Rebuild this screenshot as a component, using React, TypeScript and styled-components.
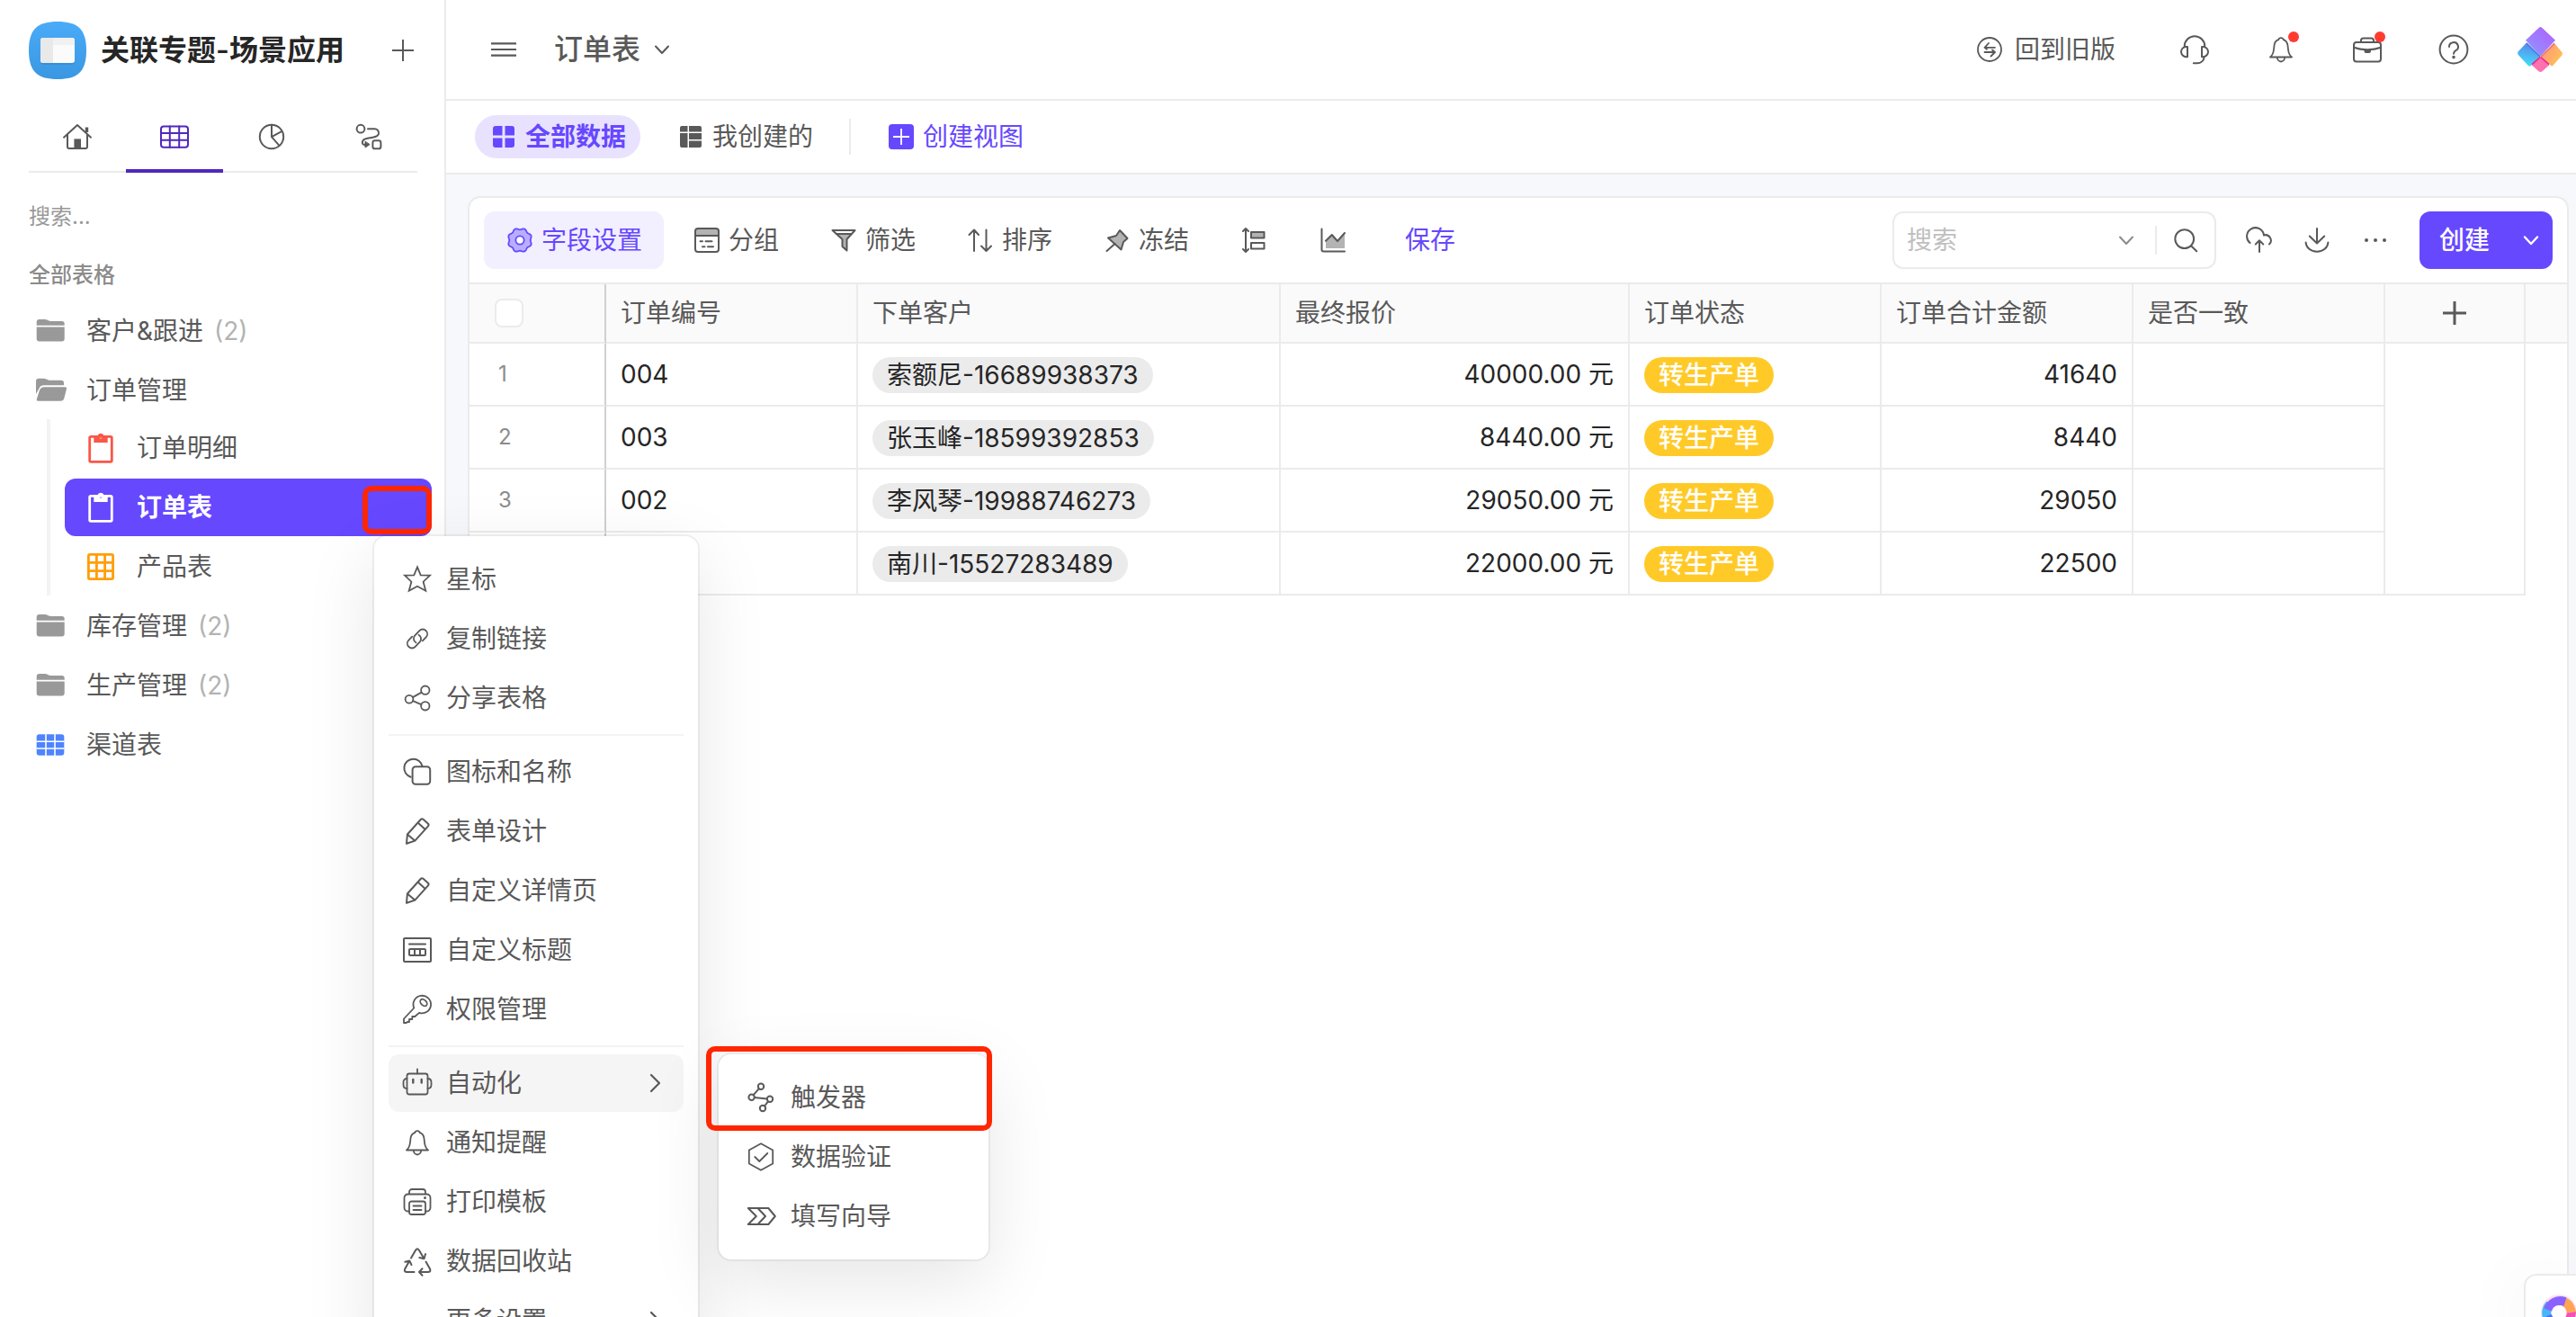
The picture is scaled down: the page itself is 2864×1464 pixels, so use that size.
import React from "react";
import styled, { createGlobalStyle, css } from "styled-components";

const color = {
  text: "#262626",
  sub: "#595959",
  muted: "#8c8c8c",
  faint: "#b3b3b3",
  line: "#ebebeb",
  primary: "#6648ff",
  canvas: "#f7f8fb",
  annotation: "#ff2600",
};

const GlobalStyle = createGlobalStyle`
  *, *::before, *::after { box-sizing: border-box; }
  body {
    margin: 0;
    background: #fff;
    color: ${color.sub};
    font-family: Inter, "Noto Sans CJK SC", sans-serif;
    font-size: 28px;
    line-height: 40px;
  }
  button, input { font: inherit; color: inherit; }
  button { border: 0; background: none; padding: 0; cursor: pointer; white-space: nowrap; }
  ul { list-style: none; margin: 0; padding: 0; }
  h1, h2 { margin: 0; font-size: inherit; font-weight: inherit; }
`;

/* ---------- icons ---------- */

const Svg = styled.svg.attrs({ fill: "none", stroke: "currentColor", "aria-hidden": true })`
  display: block;
  flex: none;
  overflow: visible;
`;

type IconProps = { size?: number; w?: number; children: React.ReactNode };
const Icon = ({ size = 32, w = 2, children }: IconProps) => (
  <Svg width={size} height={size} viewBox={`0 0 ${size} ${size}`} strokeWidth={w} strokeLinecap="round" strokeLinejoin="round">
    {children}
  </Svg>
);

const gearPath =
  Array.from({ length: 96 }, (_, i) => {
    const a = (i / 96) * Math.PI * 2;
    const r = 12.6 - 0.9 * Math.cos(8 * a);
    return `${i ? "L" : "M"}${(14 + r * Math.cos(a)).toFixed(2)} ${(14 + r * Math.sin(a)).toFixed(2)}`;
  }).join("") + "Z";

const AppLogo = () => (
  <Svg width="64" height="64" viewBox="0 0 64 64" strokeWidth="0">
    <defs>
      <linearGradient id="appBg" x1="0" y1="0" x2="0" y2="1">
        <stop offset="0" stopColor="#4aabf8" />
        <stop offset="1" stopColor="#3a97e2" />
      </linearGradient>
    </defs>
    <path fill="url(#appBg)" d="M32 0C54 0 64 8 64 32S54 64 32 64 0 56 0 32 10 0 32 0Z" />
    <rect x="13" y="20" width="38" height="28" rx="4" fill="#2c7fc4" opacity=".45" />
    <rect x="13" y="18" width="38" height="28" rx="3" fill="#fbfbfb" />
    <path fill="#f1f1f1" d="M27 18h21a3 3 0 0 1 3 3v5H27z" />
    <path fill="#e9e9e9" d="M16 18h11v28H16a3 3 0 0 1-3-3V21a3 3 0 0 1 3-3z" />
  </Svg>
);

const HomeIcon = () => (
  <Icon>
    <path d="M1 16.700 16 3l15 13.700M5 13.500V27a2 2 0 0 0 2 2h18a2 2 0 0 0 2-2V13.500" />
    <path d="M26.500 11V5.500" strokeWidth="3.400" strokeLinecap="butt" />
    <path d="M12.400 29V18.400h7.600V29z" fill="currentColor" stroke="none" />
  </Icon>
);
const GridIcon = () => (
  <Icon>
    <rect x="1" y="4.400" width="30" height="23.400" rx="3" />
    <path d="M10.800 4.400v23.400M21.200 4.400v23.400M1 12h30M1 19.800h30" />
  </Icon>
);
const PieIcon = () => (
  <Icon>
    <circle cx="16" cy="16" r="13.200" />
    <path d="M16 2.800v13.400l11-6M16 16.200l8.500 9.600" />
  </Icon>
);
const FlowIcon = () => (
  <Icon>
    <circle cx="7" cy="7.200" r="4.400" />
    <path d="M15 7.300h7.500a4.600 4.600 0 0 1 4.500 5.500c-.6 2.600-3 3.300-6.500 3.900l-6 1.100c-3.500.6-5 1.600-5.600 3.900-.4 1.900.9 3.300 3.100 3.300h1" />
    <path d="M12 21.600v6.400l4.800-3.200z" fill="currentColor" strokeWidth="1" />
    <rect x="20.400" y="20.300" width="9" height="9" rx="2.400" />
  </Icon>
);
const FolderIcon = () => (
  <Icon w={0}>
    <path fill="#999" d="M.7 9.800V6a3 3 0 0 1 3-3h6.500c1.500 0 2.600 1 4 1.600.8.300 1.200.4 2 .4h12.500a3 3 0 0 1 3 3v1.800zM.7 11.400h31v13a3 3 0 0 1-3 3h-25a3 3 0 0 1-3-3z" />
  </Icon>
);
const FolderOpenIcon = () => (
  <Icon w={0}>
    <path fill="#999" d="M0 20V5.700a3 3 0 0 1 3-3h6c1.500 0 2.500.8 3.800 1.400.7.4 1.300.6 2 .6H28a3 3 0 0 1 3 3v2.600H9c-2.600 0-4.500 1-5.300 3.300z" />
    <path fill="#999" d="M9.500 12.200h23a1.600 1.600 0 0 1 1.500 2l-2.700 10.600a4 4 0 0 1-3.900 3h-25a1.600 1.600 0 0 1-1.600-2L3.900 16a5.600 5.600 0 0 1 5.600-3.800z" />
  </Icon>
);
const ClipboardIcon = () => (
  <Icon w={2.8}>
    <rect x="3.700" y="3.400" width="24.600" height="28" rx="1.400" />
    <path
      fill="currentColor"
      stroke="none"
      fillRule="evenodd"
      d="M8.300 2.400h4A3.900 3.900 0 0 1 19.700 2.400h4V10H8.300ZM17.500 4a1.500 1.500 0 1 0-3 0 1.500 1.500 0 0 0 3 0Z"
    />
  </Icon>
);
const OrangeGridIcon = () => (
  <Icon w={2.8}>
    <rect x="2.400" y="2.400" width="27.200" height="27.200" rx="1.500" />
    <path d="M11.400 2.400v27.200M20.600 2.400v27.200M2.400 11.400h27.200M2.400 20.600h27.200" />
  </Icon>
);
const BlueGridIcon = () => (
  <Icon>
    <rect x=".7" y="4.200" width="30.600" height="23.600" rx="3" fill="currentColor" stroke="none" />
    <path d="M11 4v24M21 4v24M.5 12.200h31M.5 20h31" stroke="#fff" strokeWidth="1.600" strokeLinecap="butt" />
  </Icon>
);
const PlusIcon = ({ size = 24, w = 2 }: { size?: number; w?: number }) => (
  <Icon size={size} w={w}>
    <path strokeLinecap="butt" d={`M${size / 2} 0V${size}M0 ${size / 2}H${size}`} />
  </Icon>
);
const HamburgerIcon = () => (
  <Icon size={28} w={2.2}>
    <path strokeLinecap="butt" d="M0 7.400h28M0 14h28M0 20.600h28" />
  </Icon>
);
const ChevronDown = ({ w = 2 }: { w?: number }) => (
  <Icon size={16} w={w}>
    <path d="M1 4.500 8 12l7-7.500" />
  </Icon>
);
const ChevronRight = () => (
  <Icon size={20} w={2.2}>
    <path d="m6 1 9 9-9 9" />
  </Icon>
);
const BoardIcon = () => (
  <Icon size={24} w={0}>
    <path fill="currentColor" d="M3 0h7.500v10.500H0V3a3 3 0 0 1 3-3zM13.500 0H21a3 3 0 0 1 3 3v7.500H13.500zM0 13.500h10.500V24H3a3 3 0 0 1-3-3zM13.500 13.500H24V21a3 3 0 0 1-3 3h-7.500z" />
  </Icon>
);
const SheetIcon = () => (
  <Icon size={24} w={0}>
    <path fill="currentColor" d="M2 0h6.500v6.500H0V2a2 2 0 0 1 2-2zM10 0h12a2 2 0 0 1 2 2v4.500H10zM0 8h8.500v16H2a2 2 0 0 1-2-2zM10 8h14v7H10zM10 16.600h14V22a2 2 0 0 1-2 2H10z" />
  </Icon>
);
const AddViewIcon = () => (
  <Icon size={28} w={1.8}>
    <rect width="28" height="28" rx="4" fill="currentColor" stroke="none" />
    <path stroke="#fff" strokeLinecap="butt" d="M14 5v18M5 14h18" />
  </Icon>
);
const GearIcon = () => (
  <Icon size={28} w={1.8}>
    <path d={gearPath} fill="#b9adff" />
    <circle cx="14" cy="14" r="4.600" fill="#fff" />
  </Icon>
);
const GroupIcon = () => (
  <Icon size={28}>
    <path d="M1 9V4a3 3 0 0 1 3-3h20a3 3 0 0 1 3 3v5z" fill="#b3b3b3" />
    <path d="M1 9v15a3 3 0 0 0 3 3h20a3 3 0 0 0 3-3V9M6.500 15.300h2.500M12.500 15.300h7M9 21.300h2.500M15 21.300h6" />
  </Icon>
);
const FunnelIcon = () => (
  <Icon size={28}>
    <path d="M5.500 7h17L17.500 13v12.500L12.500 21v-8z" fill="#b3b3b3" stroke="none" />
    <path d="M1.500 3h25l-9 10v12.500l-5-4.500v-8zM5.500 7h17" />
  </Icon>
);
const SortIcon = () => (
  <Icon size={28}>
    <path d="M7 26V2.500M1.500 8 7 2.500 12 8M20.500 2.500V26M15 20.500l5.500 5.500 5.500-5.500" />
  </Icon>
);
const PinIcon = () => (
  <Icon size={28}>
    <path d="m17 3 8.500 9-4.500 4-2.500 8.500L4 11.500 13 9z" fill="#b3b3b3" />
    <path d="M11.500 18 2.500 26" />
  </Icon>
);
const RowHeightIcon = () => (
  <Icon size={28}>
    <path d="M5 1.500v25M2 4l3-3 3 3M2 24l3 3 3-3" />
    <rect x="11" y="5" width="14.500" height="6.500" fill="#b3b3b3" />
    <rect x="11" y="17" width="14.500" height="6.500" />
  </Icon>
);
const ChartIcon = () => (
  <Icon size={28}>
    <path d="M6 15.500 12.800 8l6.200 7L27 6.500V23H6z" fill="#b3b3b3" stroke="none" />
    <path d="M1.500 1.500v23a2 2 0 0 0 2 2H27M6 14.700 12.800 8l6.200 7 8-9" />
  </Icon>
);
const SwapIcon = () => (
  <Icon size={28} w={1.8}>
    <circle cx="14" cy="14" r="13" />
    <path d="M20 11.800H8.500L13 7M8.500 11.800l2.500 2M8.500 17h11.500l-4.500 4.500M20 17l-3-2.500" />
  </Icon>
);
const HeadsetIcon = () => (
  <Icon>
    <path d="M4.700 13.500v-1a11.300 11.300 0 0 1 22.600 0v1M8 13v11.200H6.600a5.600 5.600 0 0 1 0-11.200zM24 13v11.200h1.400a5.600 5.600 0 0 0 0-11.200zM26.700 24.300c-.5 4-3.500 7-8 7h-3.900" />
  </Icon>
);
const BellIcon = () => (
  <Icon w={1.8}>
    <path d="M4 24.500c2.500-2 3.500-4 4-8.500l.5-4.500c.4-3.500 2-5.400 4.700-6.300a2.900 2.900 0 0 1 5.600 0c2.700.9 4.300 2.800 4.700 6.300l.5 4.500c.5 4.500 1.500 6.500 4 8.500zM11.800 24.500a4.200 5 0 0 0 8.400 0" />
  </Icon>
);
const BriefcaseIcon = () => (
  <Icon>
    <rect x="1" y="8" width="30" height="21.400" rx="3" />
    <path d="M9 8V6a2.600 2.600 0 0 1 2.600-2.600h8.800A2.600 2.600 0 0 1 23 6v2M1 13.800c9 3.400 21 3.400 30 0" />
    <path d="M12.500 16.300h7.500v1.700a2 2 0 0 1-2 2h-3.500a2 2 0 0 1-2-2z" fill="currentColor" stroke="none" />
  </Icon>
);
const HelpIcon = () => (
  <Icon>
    <circle cx="16" cy="16" r="15.400" />
    <path d="M11 13a5 4.800 0 1 1 7.300 4.200c-1.500.9-2.300 1.800-2.300 3.600" />
    <circle cx="16" cy="24.600" r=".8" fill="currentColor" />
  </Icon>
);
const BrandIcon = () => (
  <Svg width="50" height="50" viewBox="0 0 50 50" strokeWidth="0">
    <defs>
      <linearGradient id="brandA" x1="1" y1="0" x2="0" y2="1">
        <stop offset="0" stopColor="#b35cff" />
        <stop offset="1" stopColor="#8b9bff" />
      </linearGradient>
      <linearGradient id="brandB" x1=".6" y1="0" x2=".4" y2="1">
        <stop offset="0" stopColor="#5c82ea" />
        <stop offset="1" stopColor="#41e0fb" />
      </linearGradient>
      <linearGradient id="brandC" x1="0" y1="0" x2="1" y2=".6">
        <stop offset="0" stopColor="#ff8f86" />
        <stop offset="1" stopColor="#ffc156" />
      </linearGradient>
    </defs>
    <path fill="url(#brandB)" d="M10 17.500 25.500 33 14.500 43.200q-1.300 1-2.600-.2L.8 31q-1.500-2 0-3.800z" />
    <path fill="url(#brandC)" d="M41 18 49.400 28q1.300 1.800 0 3.600L39.500 42.800q-1.200 1.200-2.500 0L25.500 33z" />
    <path fill="url(#brandA)" d="M23.600 1q1.900-1.800 3.800 0L42 14.700 25.500 32.500 9 14.700z" />
    <path fill="#ff70ae" d="M25.500 33.500 35.500 42l-8 7.200q-2 1.500-4 0l-8-7.200z" />
    <path stroke="#e6288b" strokeWidth="1.600" d="M25.800 33.500 35 41.600M25.200 33.500 16 41.600" />
    <path stroke="#4c74e0" strokeWidth="1.600" d="M10 18 25 33" />
    <path stroke="#ef7068" strokeWidth="1.600" d="M41 18.400 26 33" />
  </Svg>
);
const SearchIcon = () => (
  <Icon size={28}>
    <circle cx="12.700" cy="12.600" r="10.400" />
    <path d="m20.300 20.500 5.900 5.700" />
  </Icon>
);
const UploadIcon = () => (
  <Icon size={28}>
    <path d="M3.500 17A9.500 9.500 0 1 1 19 8.500a6 6 0 0 1 6 10M14 27V14.500M9.800 18.500l4.200-4.200 4.200 4.200" />
  </Icon>
);
const DownloadIcon = () => (
  <Icon size={28}>
    <path d="M14 1v16.500M5.800 9.500l8.200 8 8.200-8M1.600 16.500c.5 6 5.400 10.200 12.400 10.200s11.900-4.200 12.400-10.200" />
  </Icon>
);
const DotsIcon = () => (
  <Icon size={28} w={0}>
    <g fill="currentColor">
      <circle cx="4" cy="14" r="2" />
      <circle cx="14" cy="14" r="2" />
      <circle cx="24" cy="14" r="2" />
    </g>
  </Icon>
);

const StarIcon = () => (
  <Icon w={1.8}>
    <path strokeLinejoin="miter" d="m16 2.300 3.700 9.100 10.300.3-7.400 7 2.700 10-9.300-5-9.300 5 2.700-10-7.400-7 10.300-.3z" />
  </Icon>
);
const LinkIcon = () => (
  <Icon w={1.8}>
    <path d="M14.500 20.300a5 5 0 0 1-1.400-7.600l5.200-5.600a5 5 0 0 1 7.300 0 5.200 5.200 0 0 1 0 7.300l-3.800 4" />
    <path d="M17.500 11.700a5 5 0 0 1 1.400 7.600l-5.200 5.600a5 5 0 0 1-7.300 0 5.200 5.200 0 0 1 0-7.300l3.800-4" />
  </Icon>
);
const ShareIcon = () => (
  <Icon w={1.8}>
    <circle cx="7" cy="17.300" r="4.400" />
    <circle cx="24.800" cy="7.200" r="4.700" />
    <circle cx="24.800" cy="24.800" r="4.700" />
    <path d="m10.900 15.100 9.800-5.500M11 19.200l9.400 3.900" />
  </Icon>
);
const ShapesIcon = () => (
  <Icon>
    <rect x="10.600" y="10.300" width="19.600" height="19.400" rx="3.500" />
    <path d="M8.700 21.700A10.200 10.200 0 1 1 21.600 10" />
  </Icon>
);
const PencilIcon = () => (
  <Icon>
    <path d="m4 29.800.9-10.300L19.700 3a2 2 0 0 1 2.800-.2l5.300 4.800a2 2 0 0 1 .2 2.800L13.300 26.600zM4.900 19.500l8.400 7.100M16.600 6.500l7.600 6.900" />
  </Icon>
);
const TitleIcon = () => (
  <Icon>
    <rect x="1" y="3" width="30" height="26" rx="1" />
    <path d="M7 9.500h18" />
    <rect x="7" y="15" width="18" height="7" rx="1" />
    <path d="M13 15v7M19 15v7" />
  </Icon>
);
const KeyIcon = () => (
  <Icon w={1.8}>
    <path d="M12.300 14.500A9.800 9.800 0 1 1 18 19.800L13.300 24h-3v3H7v3H5l-1.300 1H1v-4.500z" />
    <ellipse cx="23" cy="8.500" rx="3" ry="4.400" transform="rotate(-45 23 8.500)" />
  </Icon>
);
const RobotIcon = () => (
  <Icon w={1.8}>
    <rect x="4.500" y="5.500" width="23" height="23" rx="2.500" />
    <path d="M16 .5v5M4.500 11C2 11 .5 12.500.5 15v3c0 2.500 1.500 4 4 4M27.500 11c2.500 0 4 1.500 4 4v3c0 2.500-1.500 4-4 4" />
    <path d="M11.300 12v3.500M20.700 12v3.500" strokeWidth="2.400" />
  </Icon>
);
const PrinterIcon = () => (
  <Icon w={1.8}>
    <path d="M7 7.500V5a3 3 0 0 1 3-3h12a3 3 0 0 1 3 3v2.500M7 26.500H5.500a4 4 0 0 1-4-4v-11a4 4 0 0 1 4-4h21a4 4 0 0 1 4 4v11a4 4 0 0 1-4 4H25" />
    <path d="M7 18a2.500 2.500 0 0 1 2.500-2.500h13A2.500 2.500 0 0 1 25 18v9.500a2.500 2.500 0 0 1-2.500 2.500h-13A2.500 2.500 0 0 1 7 27.500zM11.500 20.500h9M11.500 25h9" />
    <circle cx="24.500" cy="11.500" r=".6" fill="currentColor" />
  </Icon>
);
const RecycleIcon = () => (
  <Icon>
    <path d="M9 12.500 14.200 3.600q1.800-2.600 3.600 0L23.500 13.300M25 8l-1.500 5.300L18.300 12" />
    <path d="M25.500 16.500 30 24.500q1.500 3.500-2.300 3.500H18M21.500 24.300 18 28l3.500 3.700" />
    <path d="M12.500 28H4.500q-3.700 0-2.300-3.500L7.300 15.500M2.300 16.800l5-1.300 2.200 4.500" />
  </Icon>
);
const TriggerIcon = () => (
  <Icon>
    <circle cx="15" cy="3.700" r="3.200" />
    <circle cx="4.600" cy="15.700" r="3.200" />
    <circle cx="25" cy="17.800" r="3.200" />
    <circle cx="17" cy="28" r="3.200" />
    <path d="m12.900 6.200-6.200 7M7.800 16l14 1.500M23 20.300l-4 5.200" />
  </Icon>
);
const ValidateIcon = () => (
  <Icon w={1.8}>
    <path d="m15 1.200 13.200 7.300v15L15 30.800 1.800 23.500v-15z" />
    <path d="m8.300 16 5 5 9-9" />
  </Icon>
);
const GuideIcon = () => (
  <Icon>
    <path d="M.8 7h22.500l7.500 9-7.500 9H.8l9-9zM11.500 7l8.500 9-8.500 9" />
  </Icon>
);

/* ---------- shell ---------- */

const Page = styled.div`
  position: relative;
  display: flex;
  height: 100vh;
  overflow: hidden;
  background: #fff;
`;

const Sidebar = styled.aside`
  position: relative;
  z-index: 2;
  display: flex;
  flex-direction: column;
  flex: none;
  width: 496px;
  border-right: 2px solid ${color.line};
  padding: 0 14px 0 24px;
`;

const AppHeader = styled.header`
  display: flex;
  align-items: center;
  gap: 16px;
  height: 112px;
  padding: 0 16px 0 8px;
`;

const AppName = styled.h1`
  flex: 1;
  font-size: 32px;
  font-weight: 600;
  color: ${color.text};
  white-space: nowrap;
`;

const IconButton = styled.button<{ $size?: number }>`
  position: relative;
  display: flex;
  align-items: center;
  justify-content: center;
  width: ${(p) => p.$size ?? 32}px;
  height: ${(p) => p.$size ?? 32}px;
`;

const TabBar = styled.nav`
  display: grid;
  grid-template-columns: repeat(4, 1fr);
  flex: none;
  height: 80px;
  margin: 0 16px 0 8px;
  box-shadow: inset 0 -2px ${color.line};
`;

const Tab = styled.button<{ $active?: boolean }>`
  display: flex;
  align-items: center;
  justify-content: center;
  border: solid transparent;
  border-width: 4px 0;
  ${(p) => p.$active && css`
    color: #5127bd;
    border-bottom-color: #5127bd;
  `}
`;

const TreeSearch = styled.input`
  height: 48px;
  margin: 24px 8px 0;
  padding: 0;
  border: 0;
  outline: 0;
  font-size: 24px;
  &::placeholder { color: #999; opacity: 1; }
`;

const TreeHeading = styled.h2`
  margin: 26px 8px 14px;
  font-size: 24px;
  line-height: 32px;
  font-weight: 500;
  color: ${color.muted};
`;

const Tree = styled.ul`
  display: flex;
  flex-direction: column;
  gap: 2px;
`;

const Branch = styled(Tree)`
  margin-left: 28px;
  border-left: 4px solid #f3f3f3;
  padding-left: 16px;
`;

const TreeItem = styled.li`
  position: relative;
`;

const TreeRow = styled.button<{ $indent: number; $active?: boolean }>`
  display: flex;
  align-items: center;
  gap: 24px;
  width: 100%;
  height: 64px;
  padding-left: ${(p) => p.$indent}px;
  border-radius: 12px;
  ${(p) => p.$active && css`
    background: ${color.primary};
    color: #fff;
    font-weight: 600;
  `}
`;

const Tint = styled.span<{ $c: string }>`
  color: ${(p) => p.$c};
`;

const Count = styled.span`
  margin-left: 12px;
  color: ${color.faint};
`;

/* ---------- popup menus ---------- */

const Menu = styled.div`
  position: absolute;
  z-index: 5;
  padding: 16px;
  border-radius: 14px;
  background: #fff;
  box-shadow: 0 0 0 2px rgba(0, 0, 0, 0.05), 0 24px 80px rgba(0, 0, 0, 0.1);
`;

const ContextMenu = styled(Menu)`
  top: 100%;
  left: 344px;
  width: 360px;
`;

const SubMenu = styled(Menu)`
  top: 0;
  left: 367px;
  width: 300px;
`;

const MenuGroup = styled.ul`
  display: flex;
  flex-direction: column;
  gap: 2px;
  & + & {
    margin-top: 8px;
    border-top: 2px solid #f3f3f3;
    padding-top: 8px;
  }
`;

const MenuItem = styled.li`
  position: relative;
`;

const MenuButton = styled.button<{ $open?: boolean }>`
  display: flex;
  align-items: center;
  gap: 16px;
  width: 100%;
  height: 64px;
  padding: 0 22px 0 16px;
  border-radius: 12px;
  background: ${(p) => (p.$open ? "#f5f5f5" : "none")};
`;

const MenuLabel = styled.span`
  flex: 1;
  text-align: left;
`;

const Callout = styled.div<{ $x: number; $y: number; $w: number; $h: number }>`
  position: absolute;
  left: ${(p) => p.$x}px;
  top: ${(p) => p.$y}px;
  width: ${(p) => p.$w}px;
  height: ${(p) => p.$h}px;
  border: 6px solid ${color.annotation};
  border-radius: 10px;
  pointer-events: none;
`;

/* ---------- main column ---------- */

const Main = styled.main`
  display: flex;
  flex-direction: column;
  flex: 1;
  min-width: 0;
  background: ${color.canvas};
`;

const TopBar = styled.header`
  display: flex;
  align-items: center;
  flex: none;
  height: 112px;
  padding: 0 15px 0 48px;
  border-bottom: 2px solid ${color.line};
  background: #fff;
`;

const PageTitle = styled.button`
  display: flex;
  align-items: center;
  gap: 16px;
  margin-left: 40px;
  font-size: 32px;
  font-weight: 500;
`;

const TopActions = styled.div`
  display: flex;
  align-items: center;
  gap: 64px;
  margin-left: auto;
`;

const LabelButton = styled.button`
  display: flex;
  align-items: center;
  gap: 14px;
`;

const LegacyButton = styled(LabelButton)`
  margin-right: 8px;
`;

const RedDot = styled.span`
  position: absolute;
  top: -4px;
  right: -4px;
  width: 12px;
  height: 12px;
  border-radius: 50%;
  background: #ff3b30;
`;

const BrandLink = styled.a`
  margin-left: -9px;
`;

const ViewBar = styled.nav`
  display: flex;
  align-items: center;
  flex: none;
  height: 82px;
  padding: 0 32px;
  border-bottom: 2px solid ${color.line};
  background: #fff;
`;

const ViewTab = styled.button<{ $active?: boolean }>`
  display: flex;
  align-items: center;
  gap: 12px;
  height: 48px;
  margin-right: 24px;
  padding: 0 16px 0 20px;
  border-radius: 24px;
  ${(p) => p.$active && css`
    background: #e8e2ff;
    color: ${color.primary};
    font-weight: 600;
  `}
`;

const ViewDivider = styled.span`
  width: 2px;
  height: 40px;
  margin-right: 42px;
  background: ${color.line};
`;

const AddView = styled(LabelButton)`
  gap: 10px;
  color: ${color.primary};
`;

const Card = styled.section`
  flex: 1;
  min-height: 0;
  margin: 24px 8px 0 24px;
  border: 2px solid ${color.line};
  border-bottom: 0;
  border-radius: 14px 14px 0 0;
  background: #fff;
  overflow: hidden;
`;

const Toolbar = styled.div`
  display: flex;
  align-items: center;
  gap: 8px;
  height: 96px;
  padding: 0 16px;
  border-bottom: 2px solid ${color.line};
`;

const Tool = styled.button<{ $active?: boolean }>`
  display: flex;
  align-items: center;
  gap: 10px;
  height: 64px;
  padding: 0 24px 0 26px;
  border-radius: 12px;
  ${(p) => p.$active && css`
    background: #f2efff;
    color: ${color.primary};
  `}
`;

const IconTool = styled(Tool)`
  padding: 0 26px;
`;

const SaveButton = styled(Tool)`
  padding: 0 32px;
  color: ${color.primary};
`;

const SearchBox = styled.div`
  display: flex;
  align-items: center;
  width: 360px;
  height: 64px;
  margin-left: auto;
  margin-right: 8px;
  border: 2px solid ${color.line};
  border-radius: 12px;
`;

const SearchInput = styled.input`
  flex: 1;
  min-width: 0;
  height: 60px;
  padding: 0 0 0 14px;
  border: 0;
  outline: 0;
  background: none;
  &::placeholder { color: #bfbfbf; opacity: 1; }
`;

const SearchScope = styled(IconButton)`
  width: 64px;
  color: ${color.muted};
`;

const SearchDivider = styled.span`
  width: 2px;
  height: 32px;
  background: ${color.line};
`;

const SearchGo = styled(IconButton)`
  width: 64px;
`;

const CreateButton = styled.button`
  display: flex;
  align-items: center;
  justify-content: space-between;
  width: 148px;
  height: 64px;
  margin-left: 8px;
  padding: 0 16px 0 22px;
  border-radius: 12px;
  background: ${color.primary};
  color: #fff;
  font-weight: 500;
`;

/* ---------- table ---------- */

const Table = styled.table`
  width: 100%;
  table-layout: fixed;
  border-collapse: separate;
  border-spacing: 0;
  color: ${color.text};
`;

const Col = styled.col<{ $w?: number }>`
  width: ${(p) => (p.$w ? `${p.$w}px` : "auto")};
`;

const cell = css`
  padding: 0 16px;
  border: solid ${color.line};
  border-width: 0 2px 2px 0;
  white-space: nowrap;
`;

const Th = styled.th<{ $first?: boolean; $last?: boolean }>`
  ${cell}
  height: 66px;
  background: #fafafa;
  color: ${color.sub};
  font-weight: 400;
  text-align: left;
  ${(p) => p.$first && css`
    padding-left: 28px;
    border-right-color: #d0d0d0;
  `}
  ${(p) => p.$last && css`border-right-width: 0;`}
`;

const Td = styled.td<{ $num?: boolean }>`
  ${cell}
  height: 70px;
  text-align: ${(p) => (p.$num ? "right" : "left")};
`;

const IndexTd = styled(Td)`
  padding-left: 32px;
  border-right-color: #d0d0d0;
  font-size: 24px;
  color: ${color.muted};
`;

const EmptyTd = styled.td`
  padding: 0;
`;

const CheckBox = styled.input`
  appearance: none;
  display: block;
  width: 32px;
  height: 32px;
  margin: 0;
  border: 2px solid ${color.line};
  border-radius: 8px;
  background: #fff;
`;

const AddColumn = styled(IconButton)`
  margin: 0 auto;
`;

const Tag = styled.span<{ $solid?: boolean }>`
  display: inline-block;
  height: 40px;
  padding: 0 16px;
  border-radius: 20px;
  vertical-align: middle;
  background: ${(p) => (p.$solid ? "#ffca28" : "#ebebeb")};
  color: ${(p) => (p.$solid ? "#fff" : color.text)};
  font-weight: ${(p) => (p.$solid ? 500 : 400)};
`;

const Assistant = styled.button`
  position: fixed;
  right: 0;
  bottom: 0;
  z-index: 3;
  display: block;
  width: 58px;
  height: 48px;
  padding: 20px 0 0 16px;
  overflow: hidden;
  border: solid ${color.line};
  border-width: 2px 0 0 2px;
  border-radius: 14px 0 0 0;
  background: #fff;
  box-shadow: 0 16px 80px rgba(0, 0, 0, 0.08);
`;

/* ---------- data ---------- */

type Row = { no: string; customer: string; quote: string; status: string; total: string };

const rows: Row[] = [
  { no: "004", customer: "索额尼-16689938373", quote: "40000.00 元", status: "转生产单", total: "41640" },
  { no: "003", customer: "张玉峰-18599392853", quote: "8440.00 元", status: "转生产单", total: "8440" },
  { no: "002", customer: "李风琴-19988746273", quote: "29050.00 元", status: "转生产单", total: "29050" },
  { no: "001", customer: "南川-15527283489", quote: "22000.00 元", status: "转生产单", total: "22500" },
];

const headers = ["订单编号", "下单客户", "最终报价", "订单状态", "订单合计金额", "是否一致"];
const widths = [152, 280, 470, 388, 280, 280, 280, 156];

type Entry = { label: string; icon: React.ReactNode; more?: boolean };

const menuGroups: Entry[][] = [
  [
    { label: "星标", icon: <StarIcon /> },
    { label: "复制链接", icon: <LinkIcon /> },
    { label: "分享表格", icon: <ShareIcon /> },
  ],
  [
    { label: "图标和名称", icon: <ShapesIcon /> },
    { label: "表单设计", icon: <PencilIcon /> },
    { label: "自定义详情页", icon: <PencilIcon /> },
    { label: "自定义标题", icon: <TitleIcon /> },
    { label: "权限管理", icon: <KeyIcon /> },
  ],
  [
    { label: "自动化", icon: <RobotIcon />, more: true },
    { label: "通知提醒", icon: <BellIcon /> },
    { label: "打印模板", icon: <PrinterIcon /> },
    { label: "数据回收站", icon: <RecycleIcon /> },
    { label: "更多设置", icon: <Icon><path d="M8 16h.1M16 16h.1M24 16h.1" strokeWidth="3" /></Icon>, more: true },
  ],
];

const automation: Entry[] = [
  { label: "触发器", icon: <TriggerIcon /> },
  { label: "数据验证", icon: <ValidateIcon /> },
  { label: "填写向导", icon: <GuideIcon /> },
];

const Folder = ({ name, count }: { name: string; count: number }) => (
  <TreeItem>
    <TreeRow $indent={16}>
      <FolderIcon />
      <span>
        {name}
        <Count>({count})</Count>
      </span>
    </TreeRow>
  </TreeItem>
);

const TableMenu = () => (
  <ContextMenu>
    {menuGroups.map((group, i) => (
      <MenuGroup key={i}>
        {group.map((item) => {
          const open = item.label === "自动化";
          return (
            <MenuItem key={item.label}>
              <MenuButton $open={open}>
                {item.icon}
                <MenuLabel>{item.label}</MenuLabel>
                {item.more && <ChevronRight />}
              </MenuButton>
              {open && (
                <SubMenu>
                  <MenuGroup>
                    {automation.map((a) => (
                      <MenuItem key={a.label}>
                        <MenuButton>
                          {a.icon}
                          <MenuLabel>{a.label}</MenuLabel>
                        </MenuButton>
                      </MenuItem>
                    ))}
                  </MenuGroup>
                  <Callout $x={-14} $y={-9} $w={318} $h={94} />
                </SubMenu>
              )}
            </MenuItem>
          );
        })}
      </MenuGroup>
    ))}
  </ContextMenu>
);

export default function App() {
  return (
    <Page>
      <GlobalStyle />
      <Sidebar>
        <AppHeader>
          <AppLogo />
          <AppName>关联专题-场景应用</AppName>
          <IconButton aria-label="新建">
            <PlusIcon />
          </IconButton>
        </AppHeader>
        <TabBar>
          <Tab aria-label="首页"><HomeIcon /></Tab>
          <Tab aria-label="表格" $active><GridIcon /></Tab>
          <Tab aria-label="统计"><PieIcon /></Tab>
          <Tab aria-label="流程"><FlowIcon /></Tab>
        </TabBar>
        <TreeSearch placeholder="搜索..." aria-label="搜索表格" />
        <TreeHeading>全部表格</TreeHeading>
        <Tree>
          <Folder name="客户&跟进" count={2} />
          <TreeItem>
            <TreeRow $indent={16}>
              <FolderOpenIcon />
              订单管理
            </TreeRow>
            <Branch>
              <TreeItem>
                <TreeRow $indent={24}>
                  <Tint $c="#f95748"><ClipboardIcon /></Tint>
                  订单明细
                </TreeRow>
              </TreeItem>
              <TreeItem>
                <TreeRow $indent={24} $active>
                  <ClipboardIcon />
                  订单表
                </TreeRow>
                <Callout $x={331} $y={8} $w={77} $h={54} />
                <TableMenu />
              </TreeItem>
              <TreeItem>
                <TreeRow $indent={24}>
                  <Tint $c="#ff9e0a"><OrangeGridIcon /></Tint>
                  产品表
                </TreeRow>
              </TreeItem>
            </Branch>
          </TreeItem>
          <Folder name="库存管理" count={2} />
          <Folder name="生产管理" count={2} />
          <TreeItem>
            <TreeRow $indent={16}>
              <Tint $c="#4f84ff"><BlueGridIcon /></Tint>
              渠道表
            </TreeRow>
          </TreeItem>
        </Tree>
      </Sidebar>

      <Main>
        <TopBar>
          <IconButton aria-label="收起侧栏"><HamburgerIcon /></IconButton>
          <PageTitle>
            订单表
            <ChevronDown />
          </PageTitle>
          <TopActions>
            <LegacyButton>
              <SwapIcon />
              回到旧版
            </LegacyButton>
            <IconButton aria-label="客服"><HeadsetIcon /></IconButton>
            <IconButton aria-label="通知"><BellIcon /><RedDot /></IconButton>
            <IconButton aria-label="工作"><BriefcaseIcon /><RedDot /></IconButton>
            <IconButton aria-label="帮助"><HelpIcon /></IconButton>
            <BrandLink href="#" aria-label="主页"><BrandIcon /></BrandLink>
          </TopActions>
        </TopBar>

        <ViewBar>
          <ViewTab $active><BoardIcon />全部数据</ViewTab>
          <ViewTab><SheetIcon />我创建的</ViewTab>
          <ViewDivider />
          <AddView><AddViewIcon />创建视图</AddView>
        </ViewBar>

        <Card>
          <Toolbar>
            <Tool $active><GearIcon />字段设置</Tool>
            <Tool><GroupIcon />分组</Tool>
            <Tool><FunnelIcon />筛选</Tool>
            <Tool><SortIcon />排序</Tool>
            <Tool><PinIcon />冻结</Tool>
            <IconTool aria-label="行高"><RowHeightIcon /></IconTool>
            <IconTool aria-label="图表"><ChartIcon /></IconTool>
            <SaveButton>保存</SaveButton>
            <SearchBox>
              <SearchInput placeholder="搜索" aria-label="搜索" />
              <SearchScope aria-label="搜索范围"><ChevronDown /></SearchScope>
              <SearchDivider />
              <SearchGo aria-label="执行搜索"><SearchIcon /></SearchGo>
            </SearchBox>
            <IconButton $size={64} aria-label="上传"><UploadIcon /></IconButton>
            <IconButton $size={48} aria-label="下载"><DownloadIcon /></IconButton>
            <IconButton $size={66} aria-label="更多"><DotsIcon /></IconButton>
            <CreateButton>
              创建
              <ChevronDown w={2.4} />
            </CreateButton>
          </Toolbar>

          <Table>
            <colgroup>
              {widths.map((w, i) => <Col key={i} $w={w} />)}
              <Col />
            </colgroup>
            <thead>
              <tr>
                <Th $first><CheckBox type="checkbox" aria-label="全选" /></Th>
                {headers.map((h) => <Th key={h}>{h}</Th>)}
                <Th><AddColumn aria-label="添加字段"><PlusIcon size={26} w={3} /></AddColumn></Th>
                <Th $last />
              </tr>
            </thead>
            <tbody>
              {rows.map((r, i) => (
                <tr key={r.no}>
                  <IndexTd>{i + 1}</IndexTd>
                  <Td>{r.no}</Td>
                  <Td><Tag>{r.customer}</Tag></Td>
                  <Td $num>{r.quote}</Td>
                  <Td><Tag $solid>{r.status}</Tag></Td>
                  <Td $num>{r.total}</Td>
                  <Td />
                  {i === 0 && <Td rowSpan={rows.length} />}
                  <EmptyTd />
                </tr>
              ))}
            </tbody>
          </Table>
        </Card>
      </Main>

      <Assistant aria-label="智能助手">
        <Svg width="44" height="44" viewBox="0 0 44 44" strokeWidth="10">
          <circle cx="21" cy="21" r="20" fill="#ff9ac8" opacity=".3" strokeWidth="0" />
          <path stroke="#46b8f5" d="M8 26a13.500 13.500 0 0 1 3-14" />
          <path stroke="#f24fc0" d="M35 20c0 8-5 14-13 14" />
          <path stroke="#4f6df5" d="M24 34c-7 1-13-2-16-9" />
          <path stroke="#ffa455" d="M25 9c6 1 9 6 10 12" />
          <path stroke="#8a62ff" d="M9 18c3-8 10-12 19-9" />
          <circle cx="21" cy="21" r="8" fill="#fff" strokeWidth="0" />
        </Svg>
      </Assistant>
    </Page>
  );
}
